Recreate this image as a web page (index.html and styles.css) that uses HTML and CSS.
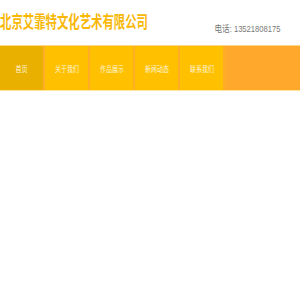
FILE: index.html
```html
<!DOCTYPE html>
<html lang="zh">
<head>
    <meta charset="UTF-8">
    <meta name="viewport" content="width=device-width, initial-scale=1.0">
    <title>北京艾霏特文化艺术有限公司</title>
    <link rel="stylesheet" href="styles.css">
</head>
<body>
    <div class="header">
        <h1 class="logo">北京艾霏特文化艺术有限公司</h1>
        <div class="tel">电话: <span class="num">13521808175</span></div>
    </div>
    <div class="nav">
        <ul>
            <li class="on"><a href="#">首页</a></li>
            <li><a href="#">关于我们</a></li>
            <li><a href="#">作品展示</a></li>
            <li><a href="#">新闻动态</a></li>
            <li><a href="#">联系我们</a></li>
        </ul>
    </div>
</body>
</html>
```

FILE: styles.css
```css
body { margin: 0; background: #fff; font-family: "Liberation Sans", "Noto Sans CJK SC", sans-serif; }
.header { height: 45px; display: flex; align-items: flex-start; white-space: nowrap; }
.logo { flex: 0 0 150px; min-width: 0; margin: 11px 0 0 0; font-size: 16.5px; line-height: 20px; font-weight: bold; color: #f9b806; font-family: "Noto Sans CJK SC", sans-serif; transform: scaleX(0.69); transform-origin: left center; }
.tel { flex-shrink: 0; margin: 24px 20px 0 auto; font-size: 9.5px; line-height: 10px; color: #7a7a7a; transform: scaleX(0.8); transform-origin: right center; }
.nav { background: #ffa82b; border-top: 1px solid #ffd98a; border-bottom: 1px solid #ffe49a; height: 44px; }
.nav ul { list-style: none; margin: 0; padding: 0; display: flex; height: 100%; }
.nav li { width: 43px; flex-shrink: 0; border-right: 2px solid #ffad26; background: #ffc000; display: flex; align-items: center; justify-content: center; white-space: nowrap; }
.nav li.on { background: #e9b000; }
.nav a { color: #fff6dc; font-size: 7.5px; text-decoration: none; transform: scaleX(0.8); }
```
